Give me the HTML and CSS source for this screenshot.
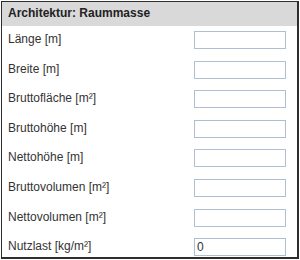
FILE: index.html
```html
<!DOCTYPE html>
<html lang="de">
<head>
    <meta charset="UTF-8">
    <title>Architektur: Raummasse</title>
    <link rel="stylesheet" href="styles.css">
</head>
<body>
    <div class="panel">
        <div class="panel-head">Architektur: Raummasse</div>
        <div class="rows">
            <div class="row"><label>Länge [m]</label><input type="text"></div>
            <div class="row"><label>Breite [m]</label><input type="text"></div>
            <div class="row"><label>Bruttofläche [m²]</label><input type="text"></div>
            <div class="row"><label>Bruttohöhe [m]</label><input type="text"></div>
            <div class="row"><label>Nettohöhe [m]</label><input type="text"></div>
            <div class="row"><label>Bruttovolumen [m²]</label><input type="text"></div>
            <div class="row"><label>Nettovolumen [m²]</label><input type="text"></div>
            <div class="row"><label>Nutzlast [kg/m²]</label><input type="text" value="0"></div>
        </div>
    </div>
</body>
</html>
```

FILE: styles.css
```css
* {
    margin: 0;
    padding: 0;
    box-sizing: border-box;
}

body {
    background: #ffffff;
    font-family: "Liberation Sans", Arial, sans-serif;
    font-size: 12px;
    color: #333333;
    padding: 1px 0 0 1px;
}

.panel {
    width: 298px;
    height: 258px;
    border: 1px solid #2e2e2e;
    border-right-width: 2px;
    border-bottom-width: 2px;
    background: #ffffff;
}

.panel-head {
    height: 24px;
    line-height: 23px;
    background: #d9d9d9;
    font-weight: bold;
    color: #222222;
    padding-left: 6px;
}

.rows {
    padding-top: 5px;
}

.row {
    height: 29.6px;
    display: flex;
    justify-content: space-between;
    padding: 0 11px 0 6px;
}

.row label {
    line-height: 17px;
}

.row input {
    width: 92px;
    height: 18px;
    border: 1px solid #aebfd4;
    font-family: inherit;
    font-size: 12px;
    color: #333333;
    padding: 0 2px;
    outline: none;
}
```
